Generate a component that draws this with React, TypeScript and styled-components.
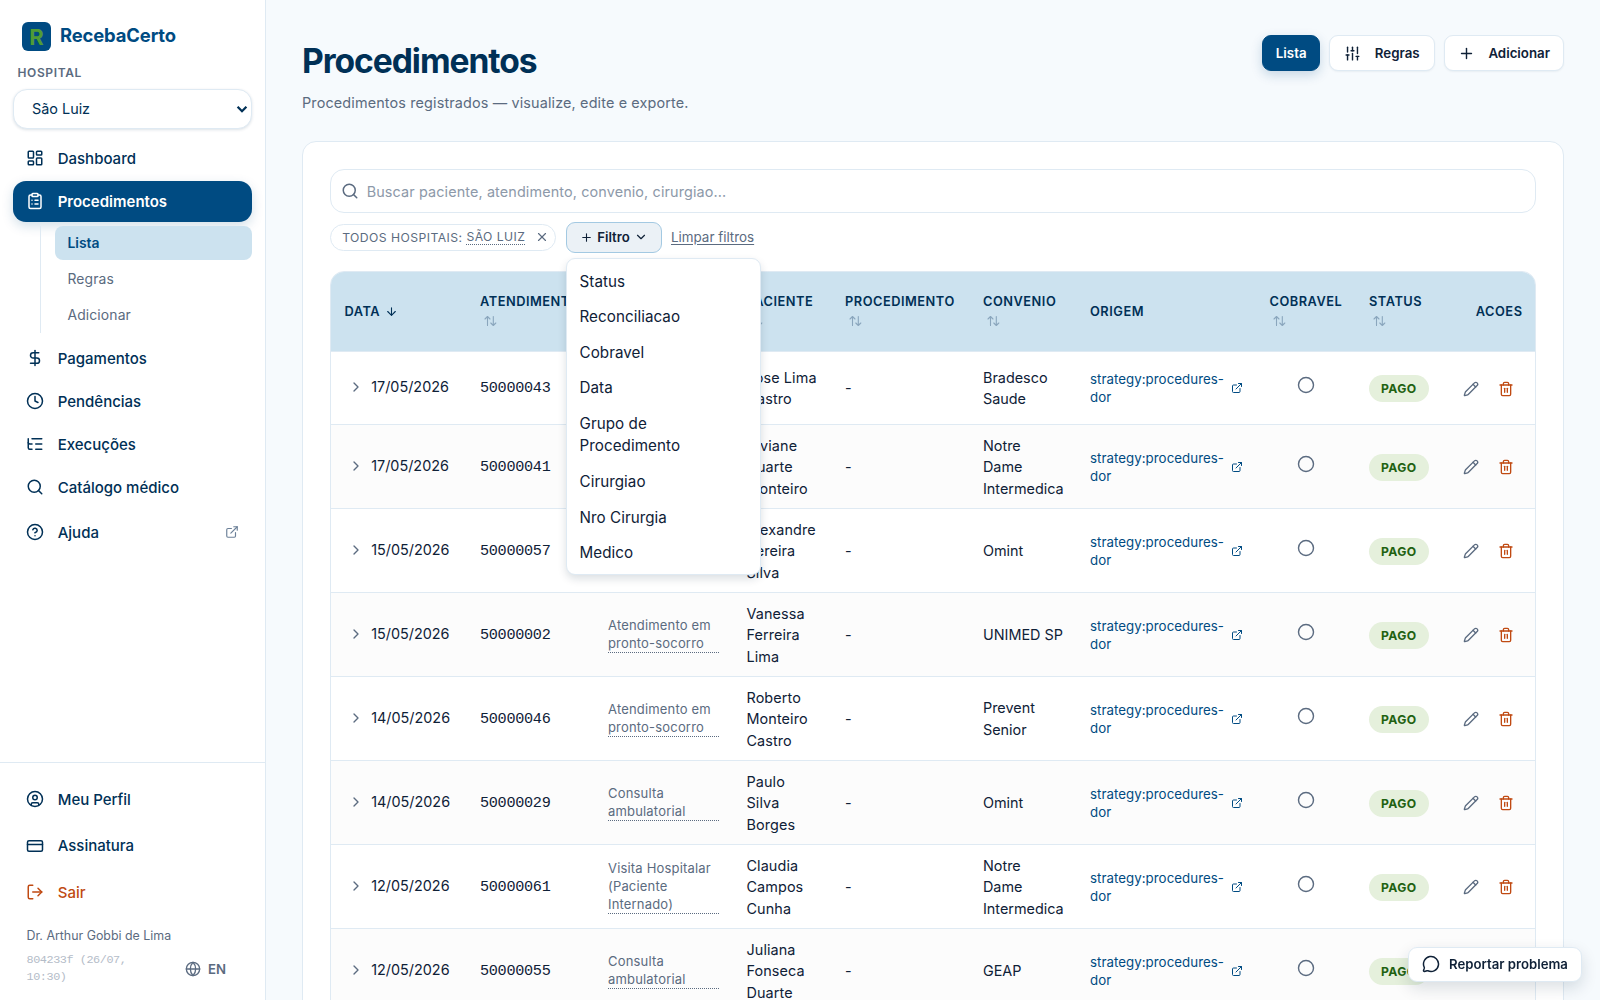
import React from "react";
import styled, { createGlobalStyle, css } from "styled-components";
import {
  ArrowDown,
  ChevronDown,
  ChevronRight,
  CircleHelp,
  CircleUser,
  Circle,
  ClipboardList,
  Clock,
  CreditCard,
  DollarSign,
  ExternalLink,
  Globe,
  LayoutDashboard,
  ListTree,
  LogOut,
  MessageCircle,
  Pencil,
  Plus,
  Search,
  SlidersVertical,
  Trash2,
  X,
} from "lucide-react";

const c = {
  navy: "#003056",
  ink: "#0f2137",
  primary: "#004b82",
  sky: "#cce2ef",
  line: "#dfeaf3",
  muted: "#5b6b80",
  rust: "#c04a12",
};

const GlobalStyle = createGlobalStyle`
  * { box-sizing: border-box; }
  body {
    margin: 0;
    background: #f6fafd;
    color: ${c.ink};
    font-family: Inter, "Liberation Sans", sans-serif;
    font-size: 16px;
    height: 1000px;
    overflow: hidden;
  }
  button, select, input { font: inherit; letter-spacing: inherit; color: inherit; }
  svg { flex: none; }
`;

const Shell = styled.div`
  display: flex;
  height: 1000px;
  overflow: hidden;
`;

/* ---------- sidebar ---------- */

const Sidebar = styled.aside`
  width: 266.4px;
  flex: none;
  background: #fff;
  border-right: 1px solid ${c.line};
  display: flex;
  flex-direction: column;
  color: ${c.navy};
`;

const SideTop = styled.div`
  flex: 1;
  padding: 22px 13.4px 0 13px;
`;

const Brand = styled.div`
  display: flex;
  align-items: center;
  gap: 9px;
  padding-left: 9px;
  height: 29px;
  font-size: 18.4px;
  font-weight: 700;
  letter-spacing: -0.12px;
  color: ${c.primary};
`;

const BrandMark = styled.span`
  width: 29px;
  height: 29px;
  border-radius: 6px;
  background: ${c.primary};
  color: #4f9c35;
  font-size: 22px;
  font-weight: 700;
  letter-spacing: 0;
  display: grid;
  place-items: center;
`;

const BrandName = styled.span`
  padding-bottom: 3px;
`;

const SideLabel = styled.div`
  margin: 13px 0 8px 4.5px;
  height: 17px;
  line-height: 17px;
  font-size: 12px;
  font-weight: 600;
  letter-spacing: 0.62px;
  color: ${c.muted};
`;

const SelectWrap = styled.div`
  position: relative;
  svg {
    position: absolute;
    right: 3px;
    top: 15px;
    pointer-events: none;
  }
`;

const HospitalSelect = styled.select`
  appearance: none;
  display: block;
  width: 239px;
  height: 40px;
  padding: 0 0 2px 18px;
  border: 1px solid ${c.line};
  border-radius: 14px;
  background: #fff;
  color: ${c.navy};
  font-size: 14.4px;
  box-shadow: 0 1px 3px rgba(0, 48, 86, 0.14);
`;

const Nav = styled.nav`
  display: flex;
  flex-direction: column;
  gap: 2.6px;
  padding-top: 9px;
`;

const NavItem = styled.a<{ $active?: boolean; $danger?: boolean; $h?: number }>`
  display: flex;
  align-items: center;
  gap: 13.5px;
  height: ${(p) => p.$h ?? 40.5}px;
  padding: 0 13.5px 0 13.2px;
  border-radius: 13px;
  font-size: 15px;
  font-weight: 500;
  color: ${(p) => (p.$danger ? c.rust : c.navy)};
  ${(p) =>
    p.$active &&
    css`
      background: ${c.primary};
      color: #fff;
      font-weight: 600;
      box-shadow: 0 4px 12px rgba(0, 75, 130, 0.18);
    `}
`;

const NavTail = styled.span`
  margin-left: auto;
  display: flex;
  color: #6c8098;
`;

const SubNav = styled.div`
  margin: 2px 0 2px 27px;
  padding-left: 13.5px;
  border-left: 1px solid ${c.line};
  display: flex;
  flex-direction: column;
  gap: 2.6px;
  height: 107px;
`;

const SubItem = styled.a<{ $active?: boolean }>`
  display: flex;
  align-items: center;
  height: 33.4px;
  padding: 0 13px;
  border-radius: 8px;
  font-size: 13.9px;
  letter-spacing: 0.12px;
  color: ${c.muted};
  ${(p) =>
    p.$active &&
    css`
      background: ${c.sky};
      color: ${c.primary};
      font-weight: 600;
      letter-spacing: 0;
    `}
`;

const SideBottom = styled.div`
  height: 238px;
  border-top: 1px solid ${c.line};
  padding: 13px 13.4px 0 13px;
`;

const UserName = styled.div`
  margin: 10px 0 0 13.5px;
  height: 20px;
  line-height: 20px;
  font-size: 12.4px;
  color: ${c.muted};
`;

const BuildRow = styled.div`
  display: flex;
  align-items: center;
  padding: 6px 13px 0 13.5px;
`;

const Build = styled.span`
  width: 130px;
  font-family: "Liberation Mono", monospace;
  font-size: 11.8px;
  letter-spacing: -0.42px;
  line-height: 17px;
  color: #b4bcc8;
`;

const Lang = styled.span`
  display: flex;
  align-items: center;
  gap: 7px;
  margin-left: 28.5px;
  font-size: 13.2px;
  font-weight: 600;
  color: ${c.muted};
`;

/* ---------- page ---------- */

const Page = styled.main`
  flex: 1;
  min-width: 0;
  padding: 35px 36px 0 35.6px;
`;

const PageHead = styled.header`
  display: flex;
  justify-content: space-between;
  align-items: flex-start;
  height: 106px;
`;

const Title = styled.h1`
  margin: 0;
  padding-top: 5px;
  font-size: 33.6px;
  line-height: 42px;
  font-weight: 700;
  letter-spacing: -1.04px;
  color: ${c.navy};
`;

const Subtitle = styled.p`
  margin: 9px 0 0;
  line-height: 24px;
  font-size: 14.4px;
  letter-spacing: 0.144px;
  color: ${c.muted};
`;

const HeadActions = styled.div`
  display: flex;
  gap: 9px;
`;

const HeadButton = styled.button<{ $primary?: boolean; $pad?: number }>`
  display: flex;
  align-items: center;
  gap: 13.6px;
  height: 36px;
  padding: 0 ${(p) => p.$pad ?? 13}px;
  border: 1px solid ${(p) => (p.$primary ? c.primary : c.line)};
  border-radius: 9px;
  background: ${(p) => (p.$primary ? c.primary : "#fff")};
  color: ${(p) => (p.$primary ? "#fff" : c.ink)};
  font-size: 13.3px;
  font-weight: 600;
  box-shadow: ${(p) =>
    p.$primary ? "0 4px 12px rgba(0, 75, 130, 0.2)" : "0 1px 2px rgba(0, 48, 86, 0.06)"};
`;

const Card = styled.section`
  border: 1px solid ${c.line};
  border-radius: 14px;
  background: #fff;
  padding: 27px;
  height: 1100px;
`;

const SearchBox = styled.div`
  display: flex;
  align-items: center;
  gap: 7.5px;
  height: 44px;
  padding: 0 10.2px;
  border: 1px solid ${c.line};
  border-radius: 14px;
  color: ${c.muted};
`;

const SearchInput = styled.input`
  flex: 1;
  border: 0;
  padding: 0;
  outline: 0;
  background: none;
  font-size: 14.4px;
  letter-spacing: 0.12px;
  &::placeholder { color: #8d99a9; }
`;

const FilterRow = styled.div`
  display: flex;
  align-items: center;
  height: 32px;
  margin: 8px 0 18px;
`;

const Chip = styled.span`
  display: flex;
  align-items: center;
  height: 27px;
  width: 226px;
  padding: 0 6px 0 11.2px;
  border: 1px solid ${c.line};
  border-radius: 14px;
  font-size: 12.2px;
  letter-spacing: 0.44px;
  color: ${c.muted};
  white-space: pre;
  svg { margin-left: auto; }
`;

const ChipValue = styled.span`
  border-bottom: 1px dotted ${c.muted};
  line-height: 14px;
`;

const FilterAnchor = styled.div`
  position: relative;
  margin: 0 9px 0 10px;
`;

const FilterButton = styled.button`
  display: flex;
  align-items: center;
  justify-content: center;
  gap: 4.5px;
  width: 96px;
  height: 31px;
  padding: 0;
  border: 1px solid #a3c9e2;
  border-radius: 9px;
  background: #ebf1f6;
  font-size: 13.2px;
  font-weight: 600;
`;

const Menu = styled.div`
  position: absolute;
  z-index: 5;
  top: 36px;
  left: 0;
  width: 195px;
  height: 317px;
  padding: 5.5px 0;
  border: 1px solid ${c.line};
  border-radius: 9px;
  background: #fff;
  box-shadow: 0 4px 8px rgba(0, 32, 60, 0.14);
`;

const MenuItem = styled.div`
  padding: 6.6px 50px 6.6px 12.5px;
  font-size: 15.2px;
  letter-spacing: 0.06px;
  line-height: 22.4px;
`;

const ClearLink = styled.a`
  font-size: 13.4px;
  text-decoration: underline;
  text-underline-offset: 2px;
  color: ${c.muted};
`;

const TableFrame = styled.div`
  border: 1px solid ${c.line};
  border-radius: 14px 14px 0 0;
  overflow: hidden;
`;

const Table = styled.table`
  width: 100%;
  table-layout: fixed;
  border-collapse: separate;
  border-spacing: 0;
`;

const HeadCell = styled.th<{ $right?: boolean }>`
  height: 79px;
  padding: 0 13.5px;
  background: ${c.sky};
  text-align: ${(p) => (p.$right ? "right" : "left")};
  font-size: 12.8px;
  line-height: 20px;
  font-weight: 600;
  letter-spacing: 0.52px;
  color: ${c.navy};
  white-space: nowrap;
`;

const SortMark = styled.span<{ $active?: boolean }>`
  display: ${(p) => (p.$active ? "inline-flex" : "flex")};
  align-items: center;
  height: 20px;
  padding: ${(p) => (p.$active ? "0 0 0 5px" : "0 0 2px 4px")};
  vertical-align: top;
  color: ${(p) => (p.$active ? c.navy : "#8aa6bd")};
`;

const Row = styled.tr<{ $alt: boolean; $h: number }>`
  height: ${(p) => p.$h}px;
  background: ${(p) => (p.$alt ? "#fcfcfc" : "#fff")};
`;

const Cell = styled.td<{ $center?: boolean }>`
  padding: 0 13.5px;
  border-top: 1px solid ${c.line};
  vertical-align: middle;
  text-align: ${(p) => (p.$center ? "center" : "left")};
  font-size: 14.4px;
  letter-spacing: ${(p) => (p.$center ? 0 : 0.1)}px;
  line-height: 21.6px;
`;

const DateCell = styled.div`
  display: flex;
  align-items: center;
  gap: 7.5px;
  padding-left: 3.2px;
  margin-top: -2.5px;
  letter-spacing: 0;
  svg { color: ${c.muted}; }
`;

const Code = styled.span`
  font-family: "Liberation Mono", monospace;
  font-size: 15.2px;
  letter-spacing: -0.3px;
`;

const Plan = styled.div`
  letter-spacing: 0;
  margin-right: -8px;
`;

const Kind = styled.div`
  border-bottom: 1px dotted #5b6b80;
  font-size: 13px;
  letter-spacing: 0.18px;
  line-height: 18px;
  color: ${c.muted};
`;

const Origin = styled.a`
  display: flex;
  align-items: center;
  gap: 6.5px;
  width: 154px;
  font-size: 13.3px;
  letter-spacing: 0.04px;
  line-height: 18px;
  color: ${c.primary};
  span { width: 134.5px; }
`;

const Toggle = styled.span`
  display: inline-flex;
  padding-bottom: 1px;
  vertical-align: middle;
  margin-top: -7px;
  color: ${c.muted};
`;

const Badge = styled.span`
  display: inline-flex;
  align-items: center;
  height: 27px;
  margin-top: 1px;
  padding: 0 12px;
  border-radius: 14px;
  background: #e5f0dc;
  color: #1f6212;
  font-size: 12.2px;
  font-weight: 700;
  letter-spacing: 0.4px;
  vertical-align: middle;
`;

const RowActions = styled.div`
  display: flex;
  justify-content: flex-end;
  gap: 19.5px;
  padding: 1px 8px 0 0;
  color: ${c.muted};
  svg:last-child { color: ${c.rust}; }
`;

const ReportButton = styled.button`
  position: fixed;
  right: 18px;
  bottom: 18px;
  z-index: 10;
  display: flex;
  align-items: center;
  gap: 9px;
  width: 174px;
  height: 35px;
  padding: 0 13px 1px;
  border: 1px solid ${c.line};
  border-radius: 9px;
  background: #fff;
  font-size: 13.2px;
  font-weight: 600;
  white-space: nowrap;
  box-shadow: 0 6px 16px rgba(0, 32, 60, 0.14);
`;

/* ---------- data ---------- */

const mainNav = [
  { label: "Pagamentos", icon: DollarSign },
  { label: "Pendências", icon: Clock },
  { label: "Execuções", icon: ListTree },
  { label: "Catálogo médico", icon: Search },
];

const filters = [
  "Status",
  "Reconciliacao",
  "Cobravel",
  "Data",
  "Grupo de Procedimento",
  "Cirurgiao",
  "Nro Cirurgia",
  "Medico",
];

const columnWidths = [135.5, 128, 138.5, 98.5, 138, 107, 179.5, 99.5, 86, 94.5];

const columns = ["ATENDIMENTO", "TIPO", "PACIENTE", "PROCEDIMENTO", "CONVENIO"];

type Entry = {
  date: string;
  code: string;
  kind: string[];
  patient: string[];
  plan: string[];
  h: number;
};

const entries: Entry[] = [
  { date: "17/05/2026", code: "50000043", kind: [], patient: ["Jose Lima", "Castro"], plan: ["Bradesco", "Saude"], h: 73.4 },
  { date: "17/05/2026", code: "50000041", kind: [], patient: ["Viviane", "Duarte", "Monteiro"], plan: ["Notre", "Dame", "Intermedica"], h: 84 },
  { date: "15/05/2026", code: "50000057", kind: [], patient: ["Alexandre", "Pereira", "Silva"], plan: ["Omint"], h: 84 },
  { date: "15/05/2026", code: "50000002", kind: ["Atendimento em", "pronto-socorro"], patient: ["Vanessa", "Ferreira", "Lima"], plan: ["UNIMED SP"], h: 84 },
  { date: "14/05/2026", code: "50000046", kind: ["Atendimento em", "pronto-socorro"], patient: ["Roberto", "Monteiro", "Castro"], plan: ["Prevent", "Senior"], h: 84 },
  { date: "14/05/2026", code: "50000029", kind: ["Consulta", "ambulatorial"], patient: ["Paulo", "Silva", "Borges"], plan: ["Omint"], h: 84 },
  { date: "12/05/2026", code: "50000061", kind: ["Visita Hospitalar", "(Paciente", "Internado)"], patient: ["Claudia", "Campos", "Cunha"], plan: ["Notre", "Dame", "Intermedica"], h: 84 },
  { date: "12/05/2026", code: "50000055", kind: ["Consulta", "ambulatorial"], patient: ["Juliana", "Fonseca", "Duarte"], plan: ["GEAP"], h: 84 },
];

const Lines = ({ of }: { of: string[] }) => (
  <>
    {of.map((text, i) => (
      <React.Fragment key={text}>
        {i > 0 && <br />}
        {text}
      </React.Fragment>
    ))}
  </>
);

const SortIcon = () => (
  <svg width="13" height="12" viewBox="0 0 13 12" fill="none" stroke="currentColor" strokeWidth="1.1" strokeLinecap="round" strokeLinejoin="round">
    <path d="M3.5 10.5V1.5M1 4l2.5-2.5L6 4M9.3 1.5v9M6.8 8l2.5 2.5L11.8 8" />
  </svg>
);

const SelectArrow = () => (
  <svg width="14" height="10" viewBox="0 0 14 10" fill="none" stroke="currentColor" strokeWidth="2.3">
    <path d="M2.6 2.8 7 7.2l4.4-4.4" />
  </svg>
);

const SortableHead = ({ label }: { label: string }) => (
  <HeadCell>
    {label}
    <SortMark>
      <SortIcon />
    </SortMark>
  </HeadCell>
);

export default function App() {
  return (
    <>
      <GlobalStyle />
      <Shell>
        <Sidebar>
          <SideTop>
            <Brand>
              <BrandMark>R</BrandMark>
              <BrandName>RecebaCerto</BrandName>
            </Brand>
            <SideLabel>HOSPITAL</SideLabel>
            <SelectWrap>
              <HospitalSelect>
                <option>São Luiz</option>
              </HospitalSelect>
              <SelectArrow />
            </SelectWrap>
            <Nav>
              <NavItem>
                <LayoutDashboard size={18} />
                Dashboard
              </NavItem>
              <NavItem $active>
                <ClipboardList size={18} />
                Procedimentos
              </NavItem>
              <SubNav>
                <SubItem $active>Lista</SubItem>
                <SubItem>Regras</SubItem>
                <SubItem>Adicionar</SubItem>
              </SubNav>
              {mainNav.map(({ label, icon: Icon }) => (
                <NavItem key={label}>
                  <Icon size={18} />
                  {label}
                </NavItem>
              ))}
              <NavItem $h={44}>
                <CircleHelp size={18} />
                Ajuda
                <NavTail>
                  <ExternalLink size={14} />
                </NavTail>
              </NavItem>
            </Nav>
          </SideTop>
          <SideBottom>
            <NavItem $h={46.6}>
              <CircleUser size={18} />
              Meu Perfil
            </NavItem>
            <NavItem $h={46.6}>
              <CreditCard size={18} />
              Assinatura
            </NavItem>
            <NavItem $h={46.6} $danger>
              <LogOut size={18} />
              Sair
            </NavItem>
            <UserName>Dr. Arthur Gobbi de Lima</UserName>
            <BuildRow>
              <Build>
                804233f (26/07,
                <br />
                10:30)
              </Build>
              <Lang>
                <Globe size={16} />
                EN
              </Lang>
            </BuildRow>
          </SideBottom>
        </Sidebar>

        <Page>
          <PageHead>
            <div>
              <Title>Procedimentos</Title>
              <Subtitle>Procedimentos registrados — visualize, edite e exporte.</Subtitle>
            </div>
            <HeadActions>
              <HeadButton $primary $pad={12.5}>
                Lista
              </HeadButton>
              <HeadButton $pad={14.2}>
                <SlidersVertical size={17} />
                Regras
              </HeadButton>
              <HeadButton>
                <Plus size={17} />
                Adicionar
              </HeadButton>
            </HeadActions>
          </PageHead>

          <Card>
            <SearchBox>
              <Search size={18} />
              <SearchInput placeholder="Buscar paciente, atendimento, convenio, cirurgiao..." />
            </SearchBox>
            <FilterRow>
              <Chip>
                {"TODOS HOSPITAIS: "}
                <ChipValue>SÃO LUIZ</ChipValue>
                <X size={14} />
              </Chip>
              <FilterAnchor>
                <FilterButton>
                  <Plus size={13} />
                  Filtro
                  <ChevronDown size={14} />
                </FilterButton>
                <Menu>
                  {filters.map((name) => (
                    <MenuItem key={name}>{name}</MenuItem>
                  ))}
                </Menu>
              </FilterAnchor>
              <ClearLink>Limpar filtros</ClearLink>
            </FilterRow>

            <TableFrame>
              <Table>
                <colgroup>
                  {columnWidths.map((w, i) => (
                    <col key={i} width={w} />
                  ))}
                </colgroup>
                <thead>
                  <tr>
                    <HeadCell>
                      DATA
                      <SortMark $active>
                        <ArrowDown size={13} />
                      </SortMark>
                    </HeadCell>
                    {columns.map((label) => (
                      <SortableHead key={label} label={label} />
                    ))}
                    <HeadCell>ORIGEM</HeadCell>
                    <SortableHead label="COBRAVEL" />
                    <SortableHead label="STATUS" />
                    <HeadCell $right>ACOES</HeadCell>
                  </tr>
                </thead>
                <tbody>
                  {entries.map((e, i) => (
                    <Row key={e.code} $alt={i % 2 === 1} $h={e.h}>
                      <Cell>
                        <DateCell>
                          <ChevronRight size={16} />
                          {e.date}
                        </DateCell>
                      </Cell>
                      <Cell>
                        <Code>{e.code}</Code>
                      </Cell>
                      <Cell>
                        {e.kind.length > 0 && (
                          <Kind>
                            <Lines of={e.kind} />
                          </Kind>
                        )}
                      </Cell>
                      <Cell>
                        <Lines of={e.patient} />
                      </Cell>
                      <Cell>-</Cell>
                      <Cell>
                        <Plan>
                          <Lines of={e.plan} />
                        </Plan>
                      </Cell>
                      <Cell>
                        <Origin>
                          <span>
                            strategy:procedures-
                            <br />
                            dor
                          </span>
                          <ExternalLink size={12} />
                        </Origin>
                      </Cell>
                      <Cell $center>
                        <Toggle>
                          <Circle size={18} strokeWidth={1.9} />
                        </Toggle>
                      </Cell>
                      <Cell>
                        <Badge>PAGO</Badge>
                      </Cell>
                      <Cell>
                        <RowActions>
                          <Pencil size={16} />
                          <Trash2 size={16} />
                        </RowActions>
                      </Cell>
                    </Row>
                  ))}
                </tbody>
              </Table>
            </TableFrame>
          </Card>
        </Page>
      </Shell>
      <ReportButton>
        <MessageCircle size={18} />
        Reportar problema
      </ReportButton>
    </>
  );
}
